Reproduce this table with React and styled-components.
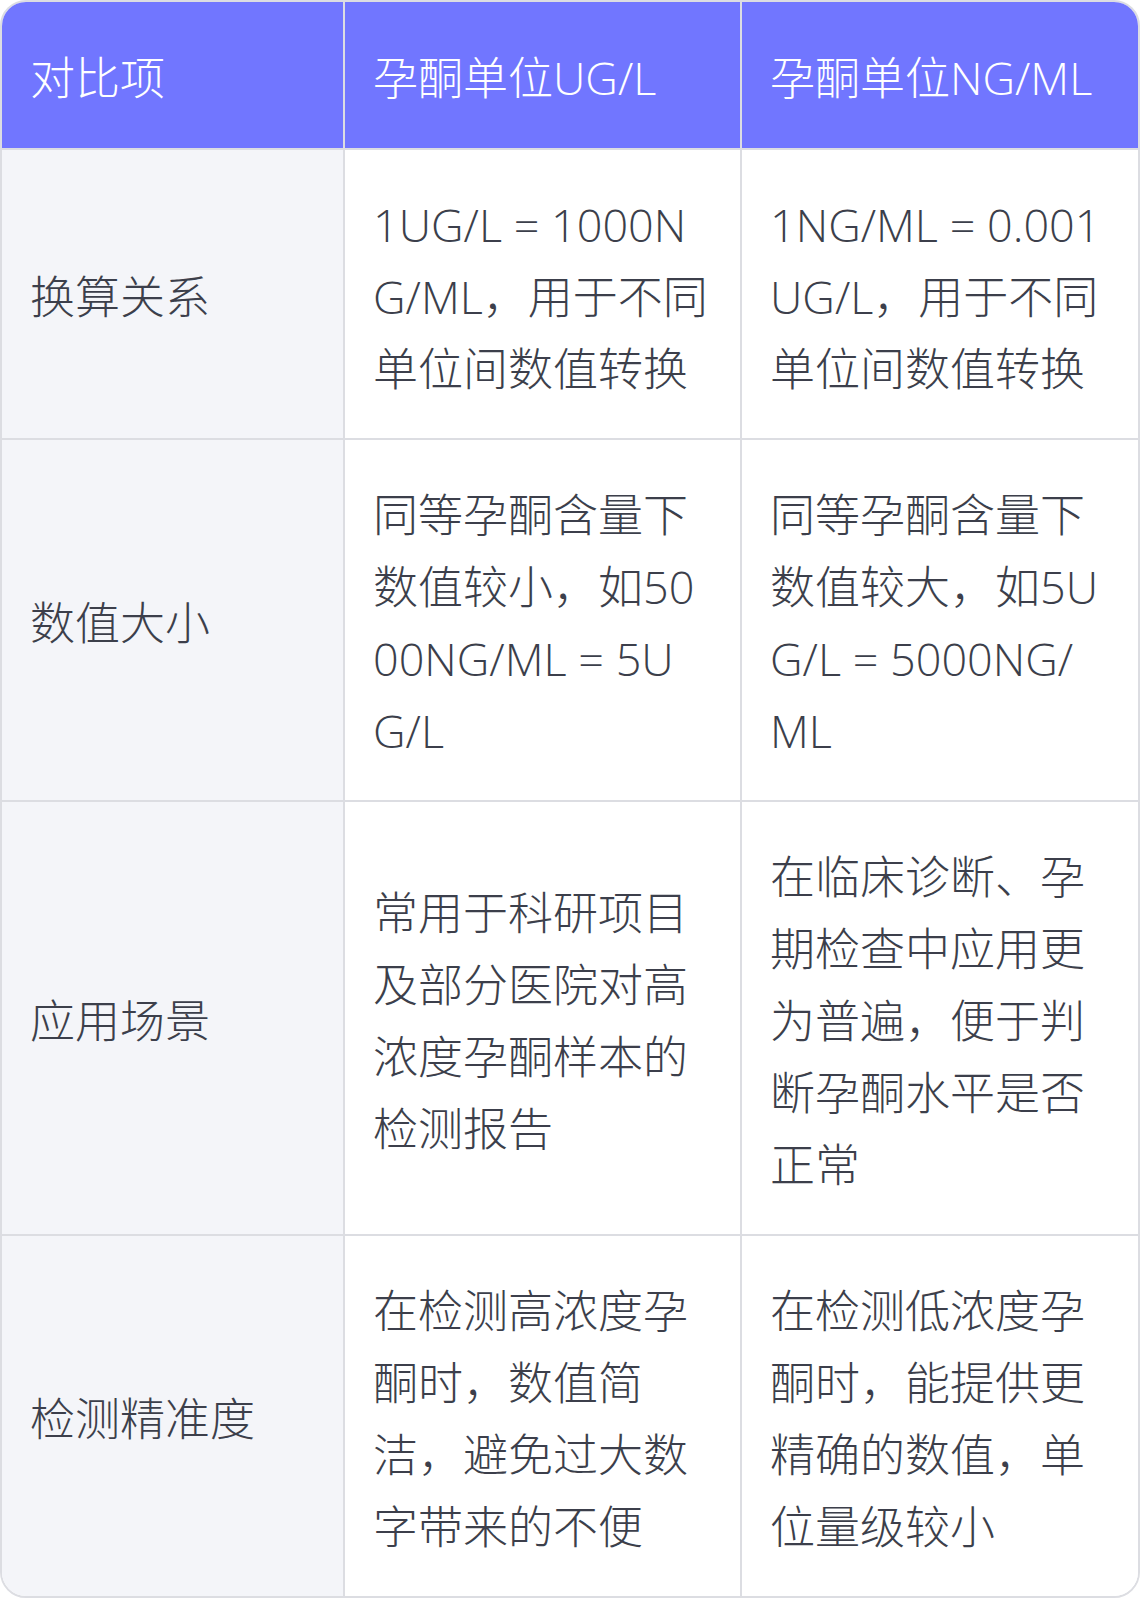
import React from "react";
import styled, { createGlobalStyle } from "styled-components";

const Global = createGlobalStyle`
  html, body { margin: 0; padding: 0; background: #ffffff; }
  body { font-family: "Open Sans", "Noto Sans CJK SC", sans-serif; }
`;

const Table = styled.div`
  width: 1140px;
  box-sizing: border-box;
  border: 2px solid #dcdde2;
  border-radius: 26px;
  overflow: hidden;
  display: grid;
  grid-template-columns: 343px 397px 1fr;
`;

const Cell = styled.div`
  box-sizing: border-box;
  padding: ${(p) => (p.$head ? "40px 28px 34px" : "39px 28px 33px")};
  font-family: "Open Sans", "Noto Sans CJK SC", sans-serif;
  font-size: 45px;
  line-height: 72px;
  font-weight: 200;
  word-break: break-all;
  display: flex;
  align-items: center;
  border-right: ${(p) => (p.$last ? "none" : "2px solid #dcdde2")};
  border-bottom: ${(p) => (p.$bottom ? "none" : "2px solid #dcdde2")};
  background: ${(p) => (p.$head ? "#7176ff" : p.$label ? "#f4f5f9" : "#ffffff")};
  color: ${(p) => (p.$head ? "#ffffff" : "#3c3f4b")};
`;

const head = ["对比项", "孕酮单位UG/L", "孕酮单位NG/ML"];
const rows = [
  ["换算关系", "1UG/L = 1000NG/ML，用于不同单位间数值转换", "1NG/ML = 0.001UG/L，用于不同单位间数值转换"],
  ["数值大小", "同等孕酮含量下数值较小，如5000NG/ML = 5UG/L", "同等孕酮含量下数值较大，如5UG/L = 5000NG/ML"],
  ["应用场景", "常用于科研项目及部分医院对高浓度孕酮样本的检测报告", "在临床诊断、孕期检查中应用更为普遍，便于判断孕酮水平是否正常"],
  ["检测精准度", "在检测高浓度孕酮时，数值简洁，避免过大数字带来的不便", "在检测低浓度孕酮时，能提供更精确的数值，单位量级较小"],
];

export default function App() {
  return (
    <>
      <Global />
      <Table>
        {head.map((h, i) => (
          <Cell key={h} $head $last={i === 2}>{h}</Cell>
        ))}
        {rows.map((r, ri) =>
          r.map((c, ci) => (
            <Cell
              key={ri + "-" + ci}
              $label={ci === 0}
              $last={ci === 2}
              $bottom={ri === rows.length - 1}
            >
              {c}
            </Cell>
          ))
        )}
      </Table>
    </>
  );
}
